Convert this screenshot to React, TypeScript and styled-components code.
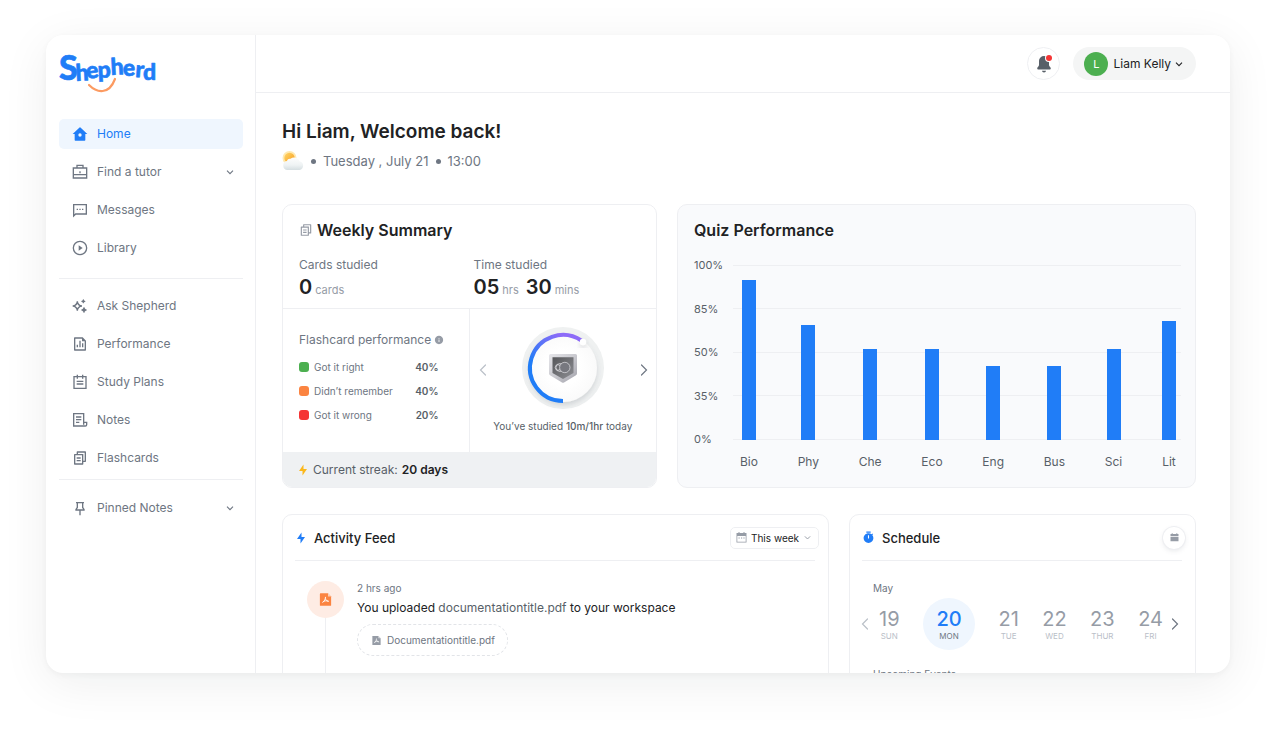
import React from "react";
import styled, { createGlobalStyle, css } from "styled-components";
import {
  RiSparklingLine,
  RiFileChartLine,
  RiFileCopy2Line,
  RiPushpin2Line,
  RiFlashlightFill,
  RiInformationFill,
  RiTimerFill,
} from "react-icons/ri";

const color = {
  blue: "#207df7",
  ink: "#212224",
  slate: "#585f68",
  gray: "#6e7682",
  mute: "#969ca6",
  faint: "#bac0c8",
  line: "#eeeff2",
  tint: "#eff6fe",
};

const GlobalStyle = createGlobalStyle`
  * { box-sizing: border-box; }
  body {
    margin: 0;
    background: #fff;
    color: ${color.ink};
    font-family: Inter, "Liberation Sans", sans-serif;
    font-size: 12px;
    line-height: 16px;
  }
  button, select { font: inherit; color: inherit; }
  button { border: 0; padding: 0; background: none; cursor: pointer; }
  a { color: inherit; text-decoration: none; }
  h1, h2, p, ul, dl, dd, dt { margin: 0; padding: 0; }
  ul { list-style: none; }
  svg { display: block; flex: none; }
`;

/* ---------- shell ---------- */

const Page = styled.div`
  height: 100vh;
  padding: 35px 46px 58px;
`;

const Frame = styled.div`
  display: grid;
  grid-template-columns: 210px minmax(0, 1fr);
  height: 100%;
  overflow: hidden;
  border-radius: 17px;
  background: #fff;
  box-shadow: 0 10px 48px rgba(20, 24, 30, 0.07), 0 2px 6px rgba(20, 24, 30, 0.04);
`;

const Sidebar = styled.aside`
  padding: 9px 12px 0 13px;
  border-right: 1px solid ${color.line};
`;

const LogoLink = styled.a`
  display: block;
  width: 98px;
  margin-bottom: 25px;
`;

const NavGroup = styled.ul`
  display: grid;
  gap: 8px;

  & + & {
    margin-top: 15px;
    padding-top: 12px;
    border-top: 1px solid ${color.line};
  }
  & + & + & {
    margin-top: 6px;
    padding-top: 13px;
  }
`;

const NavLink = styled.a<{ $active?: boolean }>`
  display: flex;
  align-items: center;
  gap: 9px;
  height: 30px;
  padding: 0 9px 0 13px;
  border-radius: 5px;
  color: ${(p) => (p.$active ? color.blue : color.gray)};
  background: ${(p) => (p.$active ? color.tint : "transparent")};
`;

const NavText = styled.span`
  flex: 1;
`;

const Main = styled.div`
  display: flex;
  flex-direction: column;
  min-height: 0;
`;

const TopBar = styled.header`
  display: flex;
  flex: none;
  justify-content: flex-end;
  gap: 13px;
  padding: 12px 34px;
  border-bottom: 1px solid ${color.line};
`;

const BellButton = styled.button`
  display: grid;
  place-items: center;
  width: 33px;
  height: 33px;
  border: 1px solid ${color.line};
  border-radius: 50%;
`;

const ProfileButton = styled.button`
  display: flex;
  align-items: center;
  height: 33px;
  padding: 0 13px 0 11px;
  border-radius: 17px;
  background: #f4f5f5;
`;

const Avatar = styled.span`
  display: grid;
  place-items: center;
  width: 24px;
  height: 24px;
  margin-right: 5px;
  border-radius: 50%;
  background: #4caf50;
  color: #fff;
  font-size: 11px;
`;

const ProfileName = styled.span`
  margin-right: 4px;
`;

const Content = styled.main`
  flex: 1;
  min-height: 0;
  overflow-y: auto;
  scrollbar-width: none;
  padding: 26px 34px 34px 26px;
`;

const Greeting = styled.h1`
  font-size: 19px;
  line-height: 26px;
  font-weight: 600;
`;

const DateRow = styled.p`
  display: flex;
  align-items: center;
  gap: 7px;
  height: 20px;
  margin: 6px 0 33px;
  font-size: 13px;
  color: ${color.gray};
`;

const Dot = styled.span`
  width: 5px;
  height: 5px;
  border-radius: 50%;
  background: ${color.gray};
`;

const CardRow = styled.div<{ $columns: string }>`
  display: grid;
  grid-template-columns: ${(p) => p.$columns};
  gap: 20px;

  & + & {
    margin-top: 26px;
  }
`;

const Card = styled.section<{ $tinted?: boolean }>`
  display: flex;
  flex-direction: column;
  min-width: 0;
  overflow: hidden;
  border: 1px solid ${color.line};
  border-radius: 10px;
  background: ${(p) => (p.$tinted ? "#f9fafc" : "#fff")};
`;

const CardTitle = styled.h2`
  display: flex;
  align-items: center;
  gap: 4px;
  font-size: 16px;
  line-height: 20px;
  font-weight: 600;
`;

/* ---------- weekly summary ---------- */

const SummaryTop = styled.div`
  padding: 15px 16px 6px;
`;

const Stats = styled.dl`
  display: grid;
  grid-template-columns: 1fr 1fr;
  gap: 8px;
  margin-top: 17px;
`;

const StatLabel = styled.dt`
  color: ${color.gray};
`;

const StatValue = styled.dd`
  display: flex;
  align-items: baseline;
  gap: 3px;
  height: 27px;
  margin-top: 2px;
  font-size: 11px;
  line-height: 24px;
  color: ${color.mute};

  strong {
    font-size: 20px;
    font-weight: 600;
    color: ${color.ink};
  }
  span + strong {
    margin-left: 4px;
  }
`;

const SummarySplit = styled.div`
  display: grid;
  flex: 1;
  grid-template-columns: minmax(0, 1fr) minmax(0, 1fr);
  min-height: 143px;
  border-top: 1px solid ${color.line};
`;

const FlashcardPanel = styled.div`
  padding: 23px 30px 0 16px;
  border-right: 1px solid ${color.line};
`;

const PanelLabel = styled.p`
  display: flex;
  align-items: center;
  gap: 3px;
  white-space: nowrap;
  color: ${color.gray};

  svg {
    color: ${color.mute};
  }
`;

const Legend = styled.ul`
  display: grid;
  gap: 8px;
  margin-top: 11px;
  font-size: 10px;
  color: ${color.gray};
`;

const LegendRow = styled.li`
  display: flex;
  align-items: center;
  gap: 5px;

  strong {
    margin-left: auto;
    font-weight: 600;
    color: ${color.slate};
  }
`;

const Swatch = styled.span<{ $fill: string }>`
  width: 10px;
  height: 10px;
  border-radius: 3px;
  background: ${(p) => p.$fill};
`;

const GoalPanel = styled.div`
  display: flex;
  flex-direction: column;
  align-items: center;
  padding-top: 18px;
  font-size: 10px;
  color: ${color.slate};

  strong {
    font-weight: 500;
  }
`;

const GoalRow = styled.div`
  display: flex;
  align-items: center;
  justify-content: space-between;
  width: 100%;
  padding: 0 7px 0 8px;
  margin-bottom: 5px;
`;

const ArrowButton = styled.button<{ $dim?: boolean }>`
  color: ${(p) => (p.$dim ? color.faint : color.gray)};
`;

const Streak = styled.p`
  display: flex;
  align-items: center;
  gap: 4px;
  height: 35px;
  padding: 0 14px;
  background: #eff1f3;
  color: ${color.slate};

  svg {
    color: #fbb81c;
  }
  strong {
    font-weight: 600;
    color: ${color.ink};
  }
`;

/* ---------- quiz chart ---------- */

const QuizBody = styled.div`
  padding: 15px 14px 17px 16px;
`;

const Chart = styled.div`
  display: grid;
  margin-top: 17px;
  color: ${color.slate};
`;

const Ticks = styled.div`
  display: flex;
  flex-direction: column;
  justify-content: space-between;
  grid-area: 1 / 1;
  height: 190px;
`;

const Tick = styled.div`
  display: grid;
  grid-template-columns: 39px 1fr;
  align-items: center;
  font-size: 11px;

  &::after {
    content: "";
    height: 1px;
    background: ${color.line};
  }
`;

const Bars = styled.div`
  display: flex;
  justify-content: space-between;
  align-items: flex-end;
  grid-area: 1 / 1;
  height: 213px;
  padding: 0 5px 0 46px;
`;

const BarColumn = styled.div`
  display: flex;
  flex-direction: column;
  align-items: center;
  gap: 14px;
`;

const Bar = styled.span`
  width: 14px;
  background: ${color.blue};
`;

/* ---------- activity + schedule ---------- */

const PanelHead = styled.div`
  display: flex;
  align-items: center;
  justify-content: space-between;
  height: 46px;
  margin: 0 13px 0 12px;
  border-bottom: 1px solid ${color.line};
`;

const PanelTitle = styled.h2`
  display: flex;
  align-items: center;
  gap: 7px;
  font-size: 13px;
  line-height: 18px;
  font-weight: 500;

  svg {
    color: ${color.blue};
  }
`;

const SelectBox = styled.label`
  display: flex;
  align-items: center;
  height: 22px;
  margin-right: -4px;
  padding: 0 7px 0 5px;
  border: 1px solid ${color.line};
  border-radius: 5px;
  color: ${color.mute};
`;

const PeriodSelect = styled.select`
  appearance: none;
  border: 0;
  outline: 0;
  padding: 0 4px 0 4px;
  background: none;
  font-size: 10px;
  line-height: 16px;
  color: ${color.ink};
`;

const Entry = styled.article`
  display: grid;
  flex: 1;
  grid-template-columns: 37px 1fr;
  gap: 13px;
  padding: 20px 24px 0;
`;

const Rail = styled.div`
  display: flex;
  flex-direction: column;
  align-items: center;

  &::after {
    content: "";
    flex: 1;
    width: 1px;
    background: ${color.line};
  }
`;

const FileBadge = styled.span`
  display: grid;
  place-items: center;
  width: 37px;
  height: 37px;
  border-radius: 50%;
  background: #feece4;
  color: #fb8441;
`;

const Time = styled.time`
  display: block;
  font-size: 10px;
  line-height: 15px;
  color: ${color.gray};
`;

const EntryText = styled.p`
  margin: 4px 0 8px;

  a {
    color: ${color.slate};
  }
`;

const FileChip = styled.a`
  display: inline-flex;
  align-items: center;
  gap: 5px;
  height: 32px;
  padding: 0 12px 0 13px;
  border: 1px dashed #e2e4e8;
  border-radius: 16px;
  font-size: 10px;
  color: ${color.gray};

  svg {
    color: ${color.mute};
  }
`;

const RoundButton = styled.button`
  display: grid;
  place-items: center;
  width: 22px;
  height: 22px;
  margin-right: -3px;
  border-radius: 50%;
  color: ${color.mute};
  box-shadow: 0 0 0 1px ${color.line}, 0 2px 5px rgba(90, 96, 110, 0.14);
`;

const ScheduleBody = styled.div`
  padding: 19px 15px 24px 10px;
`;

const SmallLabel = styled.p`
  padding-left: 13px;
  font-size: 10px;
  color: ${color.gray};
`;

const Week = styled.div`
  display: flex;
  align-items: center;
  justify-content: space-between;
  margin: 2px 0 16px;
`;

const Days = styled.div`
  display: flex;
  flex: 1;
  align-items: center;
  justify-content: space-between;
  margin: 0 7px 0 9px;
`;

const Day = styled.button<{ $active?: boolean }>`
  display: flex;
  flex-direction: column;
  align-items: center;
  justify-content: center;
  height: 52px;
  font-size: 8px;
  line-height: 10px;
  color: ${color.faint};

  span {
    font-size: 20px;
    line-height: 24px;
    color: ${color.mute};
  }

  ${(p) =>
    p.$active &&
    css`
      width: 52px;
      border-radius: 50%;
      background: ${color.tint};
      color: ${color.gray};

      span {
        font-weight: 500;
        color: ${color.blue};
      }
    `}
`;

/* ---------- drawings ---------- */

const line = { fill: "none", stroke: "currentColor" } as const;

function NavSvg({ children }: { children: React.ReactNode }) {
  return (
    <svg width="16" height="16" viewBox="0 0 24 24" {...line} strokeWidth="2" aria-hidden="true">
      {children}
    </svg>
  );
}

const HomeIcon = () => (
  <NavSvg>
    <path
      fill="currentColor"
      stroke="none"
      fillRule="evenodd"
      d="M19 22H5a1 1 0 0 1-1-1v-9H1L11.3 2.3a1 1 0 0 1 1.4 0L23 12h-3v9a1 1 0 0 1-1 1ZM12 16a2.5 2.5 0 1 0 0-5 2.5 2.5 0 0 0 0 5Z"
    />
  </NavSvg>
);

const TutorIcon = () => (
  <NavSvg>
    <path d="M2 6h20v15H2zM7.500 6V2h9v4M2 16h20M12 11v3" />
  </NavSvg>
);

const MessageIcon = () => (
  <NavSvg>
    <path d="M2.500 21V4h19v14H5.500z" />
    <path d="M7 11h2M11 11h2M15 11h2" />
  </NavSvg>
);

const LibraryIcon = () => (
  <NavSvg>
    <circle cx="12" cy="12" r="10" />
    <path d="M10 8v8l6-4z" fill="currentColor" stroke="none" />
  </NavSvg>
);

const PlanIcon = () => (
  <NavSvg>
    <path d="M3 4h18v17.500H3zM8 1v6M16 1v6M7 11h10M7 15h10" />
  </NavSvg>
);

const NotesIcon = () => (
  <NavSvg>
    <path d="M17.500 15V2.500h-15v18.500H20a2 2 0 0 0 2-2v-3.500h-4.500V19M6 7.500h8M6 11.500h8M6 15.500h5" />
  </NavSvg>
);

const ChevronDown = ({ size = 8, width = 1.1 }: { size?: number; width?: number }) => (
  <svg width={size} height={size} viewBox="0 0 8 8" {...line} strokeWidth={width} aria-hidden="true">
    <path d="M1 2.700 4 5.700 7 2.700" />
  </svg>
);

const Arrow = ({ left }: { left?: boolean }) => (
  <svg width="10" height="14" viewBox="0 0 10 14" {...line} strokeWidth="1.200" strokeLinecap="round" aria-hidden="true">
    <path d={left ? "M7.500 2 2.500 7l5 5" : "M2.500 2l5 5-5 5"} />
  </svg>
);

const Logo = () => (
  <svg width="98" height="50" viewBox="0 -8 98 50" role="img" aria-label="Shepherd">
    <g
      fill={color.blue}
      stroke={color.blue}
      strokeWidth="0.600"
      strokeLinejoin="round"
      fontFamily="Lato, sans-serif"
      fontWeight="900"
    >
      <text fontSize="34" x="0" y="28">
        S
      </text>
      <text
        fontSize="23"
        x="17 28 39 52 64 76 84"
        y="29 27 26 23 24 25 28"
        rotate="-3 -8 -3 -3 -2 4 0"
      >
        hepherd
      </text>
    </g>
    <path d="M30 33c8 8 20 10 26-6" fill="none" stroke="#fc9b62" strokeWidth="2.200" strokeLinecap="round" />
  </svg>
);

const Bell = () => (
  <svg width="18" height="20" viewBox="0 0 18 20" aria-hidden="true">
    <path
      d="M9 2a5 5 0 0 0-5 5v4c0 1.600-1.800 2-1.800 3.600 0 .6.400.9 1 .9h11.600c.600 0 1-.3 1-.9 0-1.600-1.800-2-1.800-3.600V7a5 5 0 0 0-5-5Z"
      fill={color.slate}
    />
    <path d="M7 16.800h4a2 1.600 0 0 1-4 0Z" fill={color.slate} />
    <circle cx="14" cy="4" r="4" fill="#fff" />
    <circle cx="14" cy="4" r="3" fill="#f53535" />
  </svg>
);

const Weather = () => (
  <svg width="22" height="20" viewBox="0 0 22 20" aria-hidden="true">
    <defs>
      <linearGradient id="sun" x1="0" y1="0" x2="1" y2="1">
        <stop offset="0" stopColor="#ffd76a" />
        <stop offset="1" stopColor="#f79a1c" />
      </linearGradient>
      <linearGradient id="cloud" x1="0" y1="0" x2="0" y2="1">
        <stop offset="0" stopColor="#fdfdfd" />
        <stop offset="0.600" stopColor="#eff3f4" />
        <stop offset="1" stopColor="#d5dee1" />
      </linearGradient>
    </defs>
    <circle cx="7.500" cy="7" r="7" fill="#ffe9b0" />
    <circle cx="7.500" cy="7" r="5.200" fill="url(#sun)" />
    <path
      d="M5.500 19a4.600 4.600 0 0 1-.6-9.100 3.200 3.200 0 0 1 3.600-2.200 6 6 0 0 1 9.300 2.700A4.400 4.400 0 0 1 17.500 19Z"
      fill="url(#cloud)"
    />
  </svg>
);

const PdfIcon = ({ size }: { size: number }) => (
  <svg width={size} height={size} viewBox="0 0 24 24" aria-hidden="true">
    <path d="M3 3a1 1 0 0 1 1-1h12l5 5v14a1 1 0 0 1-1 1H4a1 1 0 0 1-1-1Z" fill="currentColor" />
    <path d="M16 2l5 5h-5Z" fill="#fff" opacity="0.600" />
    <path
      d="M12 8.500c0 3-1.500 6.500-4.500 8M12 11c.8 2.300 2.300 3.600 4.800 3.900M8.800 15c2-.9 4.500-1.200 7-.6"
      fill="none"
      stroke="#fff"
      strokeWidth="1.500"
      strokeLinecap="round"
    />
  </svg>
);

const GoalRing = () => (
  <svg width="90" height="86" viewBox="-45 -41 90 86" role="img" aria-label="10 minutes of 1 hour">
    <defs>
      <linearGradient id="arc" x1="0" y1="1" x2="0.600" y2="0">
        <stop offset="0.450" stopColor="#207df7" />
        <stop offset="1" stopColor="#8d6bf8" />
      </linearGradient>
      <linearGradient id="metal" x1="0" y1="0" x2="1" y2="1">
        <stop offset="0" stopColor="#e6e6ea" />
        <stop offset="0.500" stopColor="#c9c9cf" />
        <stop offset="1" stopColor="#a3a3ab" />
      </linearGradient>
      <linearGradient id="core" x1="0" y1="0" x2="1" y2="1">
        <stop offset="0" stopColor="#56575a" />
        <stop offset="1" stopColor="#8d8e93" />
      </linearGradient>
      <radialGradient id="dish">
        <stop offset="0.500" stopColor="#fff" />
        <stop offset="1" stopColor="#fafafa" />
      </radialGradient>
      <filter id="lift" x="-30%" y="-30%" width="160%" height="160%">
        <feDropShadow dx="0" dy="3" stdDeviation="2.500" floodColor="#5a6470" floodOpacity="0.200" />
      </filter>
    </defs>
    <circle r="41" fill="#eff1f1" />
    <circle r="34" fill="url(#dish)" filter="url(#lift)" />
    <path d="M0 33A33 33 0 1 1 18.500-27.300" fill="none" stroke="url(#arc)" strokeWidth="4" />
    <circle cx="20" cy="-26" r="3.200" fill="#fff" filter="url(#lift)" />
    <path
      d="M-12.500-14h25a1.500 1.500 0 0 1 1.500 1.500V5.500a2 2 0 0 1-1 1.700L1 14.500a2 2 0 0 1-2 0L-13 7.200a2 2 0 0 1-1-1.700v-18a1.500 1.500 0 0 1 1.500-1.500Z"
      fill="url(#metal)"
    />
    <path d="M-10.500-10.800h21V5L0 11-10.500 5Z" fill="url(#core)" />
    <g fill="none" stroke="#e3e3e6" strokeWidth="0.700">
      <circle cx="-5" cy="-0.500" r="2.800" />
      <circle cx="-3" cy="-0.500" r="4" />
      <circle cx="1.800" cy="-0.500" r="5.200" fill="#77787f" />
    </g>
  </svg>
);

const CalendarIcon = () => (
  <svg width="11" height="11" viewBox="0 0 11 11" aria-hidden="true">
    <path d="M2.500 0h1v1h4V0h1v1h2v9.500H.5V1h2ZM1.300 4v5.700h8.400V4Z" fill="currentColor" fillRule="evenodd" />
    <path d="M2.500 6h1.200M5 6h1.200M7.400 6h1.200" stroke="currentColor" strokeWidth="1" />
  </svg>
);

const EventsIcon = () => (
  <svg width="9" height="9" viewBox="0 0 9 9" aria-hidden="true">
    <path d="M.5 1h1.200V.3h1V1h3.600V.3h1V1h1.200v2.300h-8ZM.5 4h8v4.200h-8Z" fill="currentColor" />
  </svg>
);

/* ---------- data ---------- */

type NavItem = { label: string; icon: React.ReactNode; active?: boolean; expandable?: boolean };

const navigation: NavItem[][] = [
  [
    { label: "Home", icon: <HomeIcon />, active: true },
    { label: "Find a tutor", icon: <TutorIcon />, expandable: true },
    { label: "Messages", icon: <MessageIcon /> },
    { label: "Library", icon: <LibraryIcon /> },
  ],
  [
    { label: "Ask Shepherd", icon: <RiSparklingLine size={16} /> },
    { label: "Performance", icon: <RiFileChartLine size={16} /> },
    { label: "Study Plans", icon: <PlanIcon /> },
    { label: "Notes", icon: <NotesIcon /> },
    { label: "Flashcards", icon: <RiFileCopy2Line size={16} /> },
  ],
  [{ label: "Pinned Notes", icon: <RiPushpin2Line size={16} />, expandable: true }],
];

const flashcards = [
  { label: "Got it right", share: 40, fill: "#4caf50" },
  { label: "Didn’t remember", share: 40, fill: "#fb8441" },
  { label: "Got it wrong", share: 20, fill: "#f53535" },
];

const ticks = ["100%", "85%", "50%", "35%", "0%"];

const quiz = [
  { subject: "Bio", height: 160 },
  { subject: "Phy", height: 115 },
  { subject: "Che", height: 91 },
  { subject: "Eco", height: 91 },
  { subject: "Eng", height: 74 },
  { subject: "Bus", height: 74 },
  { subject: "Sci", height: 91 },
  { subject: "Lit", height: 119 },
];

const days = [
  { date: 19, name: "SUN" },
  { date: 20, name: "MON", active: true },
  { date: 21, name: "TUE" },
  { date: 22, name: "WED" },
  { date: 23, name: "THUR" },
  { date: 24, name: "FRI" },
];

/* ---------- page ---------- */

function WeeklySummary() {
  return (
    <Card>
      <SummaryTop>
        <CardTitle>
          <RiFileCopy2Line size={14} color={color.mute} />
          Weekly Summary
        </CardTitle>
        <Stats>
          <div>
            <StatLabel>Cards studied</StatLabel>
            <StatValue>
              <strong>0</strong>
              <span>cards</span>
            </StatValue>
          </div>
          <div>
            <StatLabel>Time studied</StatLabel>
            <StatValue>
              <strong>05</strong>
              <span>hrs</span>
              <strong>30</strong>
              <span>mins</span>
            </StatValue>
          </div>
        </Stats>
      </SummaryTop>
      <SummarySplit>
        <FlashcardPanel>
          <PanelLabel>
            Flashcard performance <RiInformationFill size={10} />
          </PanelLabel>
          <Legend>
            {flashcards.map((row) => (
              <LegendRow key={row.label}>
                <Swatch $fill={row.fill} />
                {row.label}
                <strong>{row.share}%</strong>
              </LegendRow>
            ))}
          </Legend>
        </FlashcardPanel>
        <GoalPanel>
          <GoalRow>
            <ArrowButton $dim aria-label="Previous goal">
              <Arrow left />
            </ArrowButton>
            <GoalRing />
            <ArrowButton aria-label="Next goal">
              <Arrow />
            </ArrowButton>
          </GoalRow>
          <p>
            You’ve studied <strong>10m/1hr</strong> today
          </p>
        </GoalPanel>
      </SummarySplit>
      <Streak>
        <RiFlashlightFill size={12} />
        Current streak: <strong>20 days</strong>
      </Streak>
    </Card>
  );
}

function QuizPerformance() {
  return (
    <Card $tinted>
      <QuizBody>
        <CardTitle>Quiz Performance</CardTitle>
        <Chart>
          <Ticks>
            {ticks.map((tick) => (
              <Tick key={tick}>{tick}</Tick>
            ))}
          </Ticks>
          <Bars>
            {quiz.map((bar) => (
              <BarColumn key={bar.subject}>
                <Bar style={{ height: bar.height }} />
                {bar.subject}
              </BarColumn>
            ))}
          </Bars>
        </Chart>
      </QuizBody>
    </Card>
  );
}

function ActivityFeed() {
  return (
    <Card>
      <PanelHead>
        <PanelTitle>
          <RiFlashlightFill size={12} />
          Activity Feed
        </PanelTitle>
        <SelectBox>
          <CalendarIcon />
          <PeriodSelect aria-label="Period" defaultValue="week">
            <option value="week">This week</option>
          </PeriodSelect>
          <ChevronDown size={7} />
        </SelectBox>
      </PanelHead>
      <Entry>
        <Rail>
          <FileBadge>
            <PdfIcon size={15} />
          </FileBadge>
        </Rail>
        <div>
          <Time>2 hrs ago</Time>
          <EntryText>
            You uploaded <a href="#file">documentationtitle.pdf</a> to your workspace
          </EntryText>
          <FileChip href="#file">
            <PdfIcon size={11} />
            Documentationtitle.pdf
          </FileChip>
        </div>
      </Entry>
    </Card>
  );
}

function Schedule() {
  return (
    <Card>
      <PanelHead>
        <PanelTitle>
          <RiTimerFill size={13} />
          Schedule
        </PanelTitle>
        <RoundButton aria-label="Open calendar">
          <EventsIcon />
        </RoundButton>
      </PanelHead>
      <ScheduleBody>
        <SmallLabel>May</SmallLabel>
        <Week>
          <ArrowButton $dim aria-label="Previous days">
            <Arrow left />
          </ArrowButton>
          <Days>
            {days.map((day) => (
              <Day key={day.date} $active={day.active}>
                <span>{day.date}</span>
                {day.name}
              </Day>
            ))}
          </Days>
          <ArrowButton aria-label="Next days">
            <Arrow />
          </ArrowButton>
        </Week>
        <SmallLabel>Upcoming Events</SmallLabel>
      </ScheduleBody>
    </Card>
  );
}

export default function App() {
  return (
    <>
      <GlobalStyle />
      <Page>
        <Frame>
          <Sidebar>
            <LogoLink href="#home">
              <Logo />
            </LogoLink>
            <nav>
              {navigation.map((group) => (
                <NavGroup key={group[0].label}>
                  {group.map((item) => (
                    <li key={item.label}>
                      <NavLink href="#nav" $active={item.active}>
                        {item.icon}
                        <NavText>{item.label}</NavText>
                        {item.expandable && <ChevronDown />}
                      </NavLink>
                    </li>
                  ))}
                </NavGroup>
              ))}
            </nav>
          </Sidebar>
          <Main>
            <TopBar>
              <BellButton aria-label="Notifications">
                <Bell />
              </BellButton>
              <ProfileButton>
                <Avatar>L</Avatar>
                <ProfileName>Liam Kelly</ProfileName>
                <ChevronDown />
              </ProfileButton>
            </TopBar>
            <Content>
              <Greeting>Hi Liam, Welcome back!</Greeting>
              <DateRow>
                <Weather />
                <Dot />
                Tuesday , July 21
                <Dot />
                13:00
              </DateRow>
              <CardRow $columns="375fr 519fr">
                <WeeklySummary />
                <QuizPerformance />
              </CardRow>
              <CardRow $columns="547fr 347fr">
                <ActivityFeed />
                <Schedule />
              </CardRow>
            </Content>
          </Main>
        </Frame>
      </Page>
    </>
  );
}
